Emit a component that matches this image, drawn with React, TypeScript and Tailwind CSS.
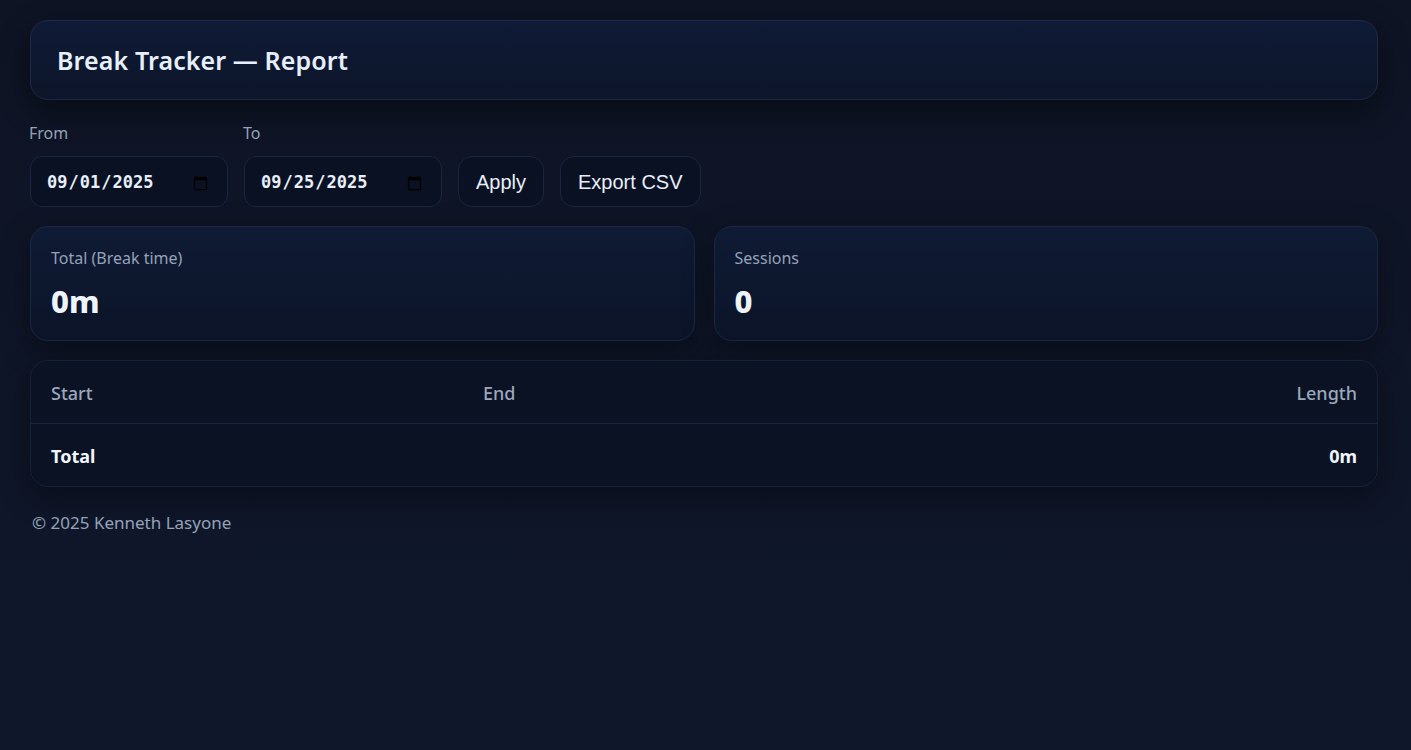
import React from "react";

const sans = { fontFamily: '"Noto Sans", "Open Sans", sans-serif' };

export default function App() {
  return (
    <div
      className="min-h-[750px] w-full bg-gradient-to-b from-[#0e1424] to-[#0f172b] text-[#e5edf8]"
      style={sans}
    >
      <div className="pl-[30px] pr-[33px] pt-[20px] pb-10 flex flex-col">
        <header className="h-[80px] rounded-[18px] border border-[#1e2a44] bg-gradient-to-b from-[#0f1a36] to-[#0c1529] shadow-[0_10px_30px_rgba(0,0,0,0.45)] flex items-center px-[26px]">
          <h1 className="text-[25px] font-semibold tracking-[0.1px] text-[#e6effb] mt-[2px]">
            Break Tracker — Report
          </h1>
        </header>

        <div className="mt-[21px] flex items-end gap-[16px]">
          <label className="flex flex-col gap-[11px]">
            <span className="text-[16px] leading-[24px] text-[#94a3b8] -ml-[1px]">From</span>
            <input
              type="date"
              defaultValue="2025-09-01"
              className="h-[51px] w-[198px] rounded-[12px] border border-[#1a2540] bg-[#0a1122] pl-[15px] pr-[16px] pt-[3px] text-[17px] font-bold text-[#e6effb] outline-none"
              style={{ fontFamily: '"DejaVu Sans Mono", "Liberation Mono", monospace' }}
            />
          </label>
          <label className="flex flex-col gap-[11px]">
            <span className="text-[16px] leading-[24px] text-[#94a3b8] -ml-[1px]">To</span>
            <input
              type="date"
              defaultValue="2025-09-25"
              className="h-[51px] w-[198px] rounded-[12px] border border-[#1a2540] bg-[#0a1122] pl-[15px] pr-[16px] pt-[3px] text-[17px] font-bold text-[#e6effb] outline-none"
              style={{ fontFamily: '"DejaVu Sans Mono", "Liberation Mono", monospace' }}
            />
          </label>
          <button
            className="h-[51px] px-[17px] rounded-[14px] border border-[#1a2540] bg-[#0a1122] text-[20px] text-[#e6effb]"
            style={{ fontFamily: '"Liberation Sans", Arial, sans-serif' }}
          >
            Apply
          </button>
          <button
            className="h-[51px] px-[17px] rounded-[14px] border border-[#1a2540] bg-[#0a1122] text-[20px] text-[#e6effb]"
            style={{ fontFamily: '"Liberation Sans", Arial, sans-serif' }}
          >
            Export CSV
          </button>
        </div>

        <div className="mt-[19px] grid grid-cols-2 gap-[19px]">
          {[
            ["Total (Break time)", "0m"],
            ["Sessions", "0"],
          ].map(([label, value]) => (
            <div
              key={label}
              className="h-[115px] rounded-[18px] border border-[#1a2743] bg-gradient-to-b from-[#0f1a34] to-[#0b1428] shadow-[0_10px_30px_rgba(0,0,0,0.35)] px-[20px] pt-[19px]"
            >
              <div className="text-[16px] leading-[24px] text-[#94a3b8]">{label}</div>
              <div className="mt-[11px] text-[31px] leading-[40px] font-extrabold text-[#eef4fc]">
                {value}
              </div>
            </div>
          ))}
        </div>

        <div className="mt-[19px] rounded-[18px] border border-[#16213a] bg-[#0a1224] shadow-[0_10px_30px_rgba(0,0,0,0.4)] overflow-hidden">
          <div className="grid grid-cols-[432px_1fr_auto] h-[63px] pt-[3px] items-center px-[20px] border-b border-[#1a2540] text-[18px] font-medium text-[#9aa8bd]">
            <span>Start</span>
            <span>End</span>
            <span>Length</span>
          </div>
          <div className="flex justify-between h-[62px] pt-[2px] items-center px-[20px] text-[18px] font-bold text-[#f2f6fc]">
            <span>Total</span>
            <span>0m</span>
          </div>
        </div>

        <footer className="mt-[23px] ml-[2px] text-[17px] text-[#94a3b8]">
          © 2025 Kenneth Lasyone
        </footer>
      </div>
    </div>
  );
}
